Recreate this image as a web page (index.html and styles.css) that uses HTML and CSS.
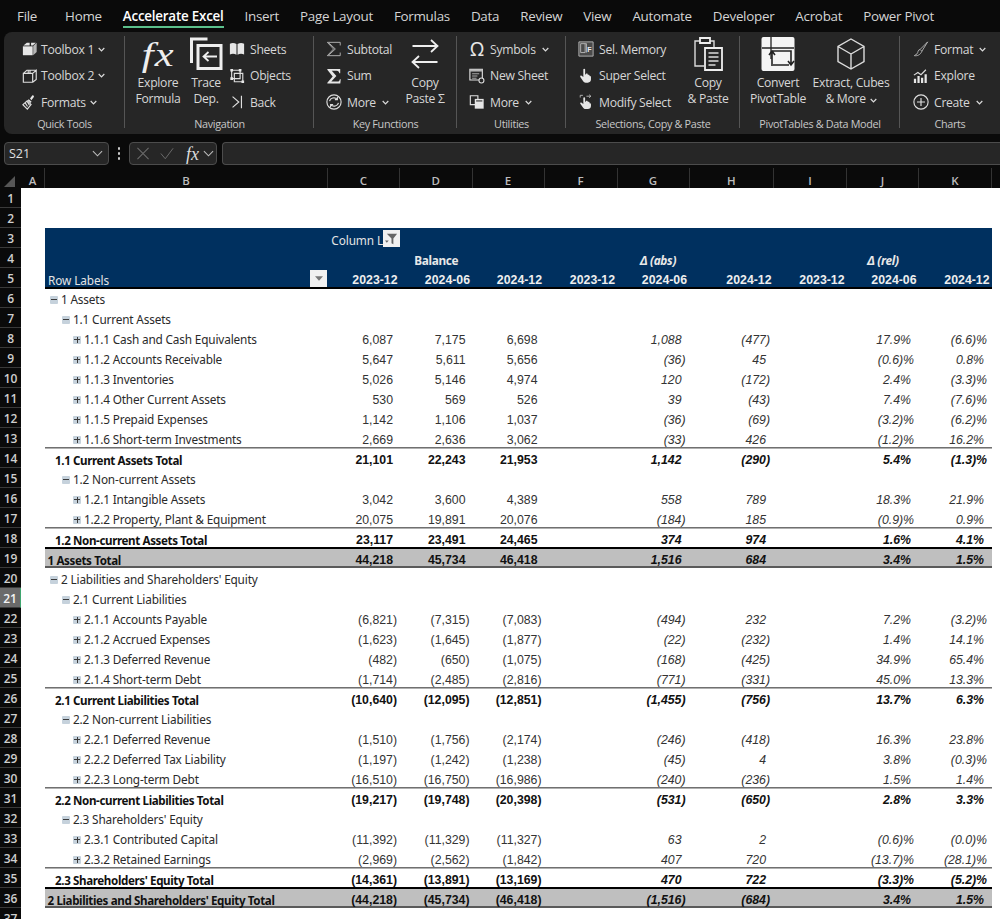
FILE: index.html
```html
<!DOCTYPE html>
<html lang="en">
<head>
<meta charset="utf-8">
<title>Accelerate Excel</title>
<link rel="stylesheet" href="styles.css">
</head>
<body>
<nav class="tabs">
  <span class="tab file">File</span><span class="tab">Home</span><span class="tab active">Accelerate Excel</span><span class="tab">Insert</span><span class="tab">Page Layout</span><span class="tab">Formulas</span><span class="tab">Data</span><span class="tab">Review</span><span class="tab">View</span><span class="tab">Automate</span><span class="tab">Developer</span><span class="tab">Acrobat</span><span class="tab">Power Pivot</span>
</nav>

<section class="ribbon">
  <div class="grp g1">
    <div class="body">
      <div class="col">
        <div class="item"><svg class="ic" viewBox="0 0 18 18"><path class="solid" d="M1 6h11v10H1z"/><path class="solid dim" d="M12.6 5.6 16.5 2v10.5l-3.9 3.5z"/><path class="solid" d="M1.6 5.2 5.4 2h3.2v3.2h1.6V2h5.4l-3.6 3.2z"/></svg><span>Toolbox 1</span><svg class="chev" viewBox="0 0 7 5"><path d="M.7 1 3.5 3.8 6.3 1"/></svg></div>
        <div class="item"><svg class="ic" viewBox="0 0 18 18"><path class="line" d="M1.5 6h10.5v10H1.5zM12 6l4-3.5V13l-4 3M1.5 6l4-3.5h10.5M7 2.5V6h2V2.5"/></svg><span>Toolbox 2</span><svg class="chev" viewBox="0 0 7 5"><path d="M.7 1 3.5 3.8 6.3 1"/></svg></div>
        <div class="item"><svg class="ic" viewBox="0 0 18 18"><path class="solid" d="M11.5 1.8c.8-.9 2.6.7 1.8 1.6L10.6 7 9 5.2z"/><path class="solid" d="m7.6 5.8 3.2 3-1.2 1.3-3.2-3z"/><path class="line" d="M6 7.6 1 12l5 5 4.2-5.2z"/><path class="line" d="m3.6 10 2.6 4M6 8.6l2.4 4"/></svg><span>Formats</span><svg class="chev" viewBox="0 0 7 5"><path d="M.7 1 3.5 3.8 6.3 1"/></svg></div>
      </div>
    </div>
    <div class="glabel">Quick Tools</div>
  </div>

  <div class="grp g2">
    <div class="body">
      <div class="big w50"><span class="fxbig">fx</span><span>Explore<br>Formula</span></div>
      <div class="big w46"><svg class="bigic" viewBox="0 0 34 36"><path class="w3" d="M2.5 27V3h16"/><path class="w3" d="M9 9.5h23v23H9z"/><path class="w2" d="M28 20.5H15M19.5 16l-5 4.5 5 4.5"/></svg><span>Trace<br>Dep.</span></div>
      <div class="col">
        <div class="item"><svg class="ic" viewBox="0 0 18 18"><path class="solid" d="M1 3c2.500-1 5-1 7.400.4V15.500C6 14.200 3.500 14.200 1 15.200z"/><path class="solid" d="M9.600 3.400C12 2 14.500 2 17 3v12.200c-2.500-1-5-1-7.400.3z"/></svg><span>Sheets</span></div>
        <div class="item"><svg class="ic" viewBox="0 0 18 18"><path class="line" d="M3 2.500h9.500V12H3zM6 6h9.500v9.500H6z"/><path class="solid" d="M1.500 1h3v3h-3zM11 1h3v3h-3zM1.500 10.500h3v3h-3zM14 14h3v3h-3z"/></svg><span>Objects</span></div>
        <div class="item"><svg class="ic" viewBox="0 0 18 18"><path class="line" d="m4 3 7 6-7 6M14 2v14"/></svg><span>Back</span></div>
      </div>
    </div>
    <div class="glabel">Navigation</div>
  </div>

  <div class="grp g3">
    <div class="body">
      <div class="col w74">
        <div class="item"><svg class="ic" viewBox="0 0 18 18"><path class="line thin" d="M16 5V1.500H1.500L8.500 9l-7 7.500H16V13M3.500 2.500l7 6.500-7 6.500"/></svg><span>Subtotal</span></div>
        <div class="item"><svg class="ic" viewBox="0 0 18 18"><path class="solid" d="M1.500 1H16v5h-1c-.3-1.800-1-2.800-3-2.800H6.500l5.200 5.800-5.700 6.300h7c1.500 0 2.300-1 2.600-2.700h1l-.5 4.900H1.500v-1l6-7L1.500 2z"/></svg><span>Sum</span></div>
        <div class="item"><svg class="ic" viewBox="0 0 18 18"><circle class="line" cx="9" cy="9" r="8"/><path class="line" d="M4 8c.6-3.500 6-5 8.500-2M14 10c-.6 3.500-6 5-8.500 2M12.800 3.500V6.300H10M5.200 14.500V11.800H8"/></svg><span>More</span><svg class="chev" viewBox="0 0 7 5"><path d="M.7 1 3.500 3.800 6.300 1"/></svg></div>
      </div>
      <div class="big w50"><svg class="bigic" viewBox="0 0 28 36"><path class="w2" d="M1.500 10H26M20 4l6.500 6-6.500 6M26.500 26H2M8 20l-6.500 6L8 32"/></svg><span>Copy<br>Paste Σ</span></div>
    </div>
    <div class="glabel">Key Functions</div>
  </div>

  <div class="grp g4">
    <div class="body">
      <div class="col">
        <div class="item"><span class="omega">Ω</span><span>Symbols</span><svg class="chev" viewBox="0 0 7 5"><path d="M.7 1 3.500 3.800 6.300 1"/></svg></div>
        <div class="item"><svg class="ic" viewBox="0 0 18 18"><path class="line" d="M1 1.500h14v12H1z"/><path class="solid dim" d="M1 1.500h14v2.500H1z"/><path class="line thin" d="M3.500 6.500h8M3.500 9h6M3.500 11.500h5"/><circle class="gear" cx="14" cy="14" r="2.800"/></svg><span>New Sheet</span></div>
        <div class="item"><svg class="ic" viewBox="0 0 18 18"><path class="line" d="M1.500 2h8.500v10H1.500z"/><path class="solid" d="M6.500 5.500h10v11h-10z"/><path class="cut" d="M8 7.800h7"/></svg><span>More</span><svg class="chev" viewBox="0 0 7 5"><path d="M.7 1 3.500 3.800 6.300 1"/></svg></div>
      </div>
    </div>
    <div class="glabel">Utilities</div>
  </div>

  <div class="grp g5">
    <div class="body">
      <div class="col w105">
        <div class="item"><svg class="ic" viewBox="0 0 18 18"><path class="solid dim2" d="M1 1h16v16H1z"/><path class="line thin" d="M1 1h16v16H1zM3 3h5v10H3zM8 3h1.500v10"/><text class="fmark" x="10.500" y="12">F</text></svg><span>Sel. Memory</span></div>
        <div class="item"><svg class="ic" viewBox="0 0 18 18"><path class="solid" d="M6 1.500c0-1 2-1 2 0V7l1 .3V6.500c1-.8 2 0 2 .5v.8c1-.6 2 0 2 .6v.8c1-.3 1.600.2 1.600 1V13c0 2-1.500 3.500-3.500 3.500H8.500c-1.200 0-2-.6-2.700-1.600L2.600 10c-.6-1 .6-2 1.500-1.200L6 10.200z"/></svg><span>Super Select</span></div>
        <div class="item"><svg class="ic" viewBox="0 0 18 18"><path class="solid" d="M6 4.500c0-1 2-1 2 0V8.500l1 .2V7.800c1-.8 2 0 2 .5v.8c1-.6 2 0 2 .6v.8c1-.3 1.600.2 1.600 1v2c0 2-1.500 3.500-3.500 3.500H8.500c-1.200 0-2-.6-2.700-1.600L2.600 11c-.6-1 .6-2 1.500-1.200L6 11.200z"/><path class="line thin" d="M2.500 4V1.500h3M9.500 2.500h5M12.500.8l2 1.700-2 1.700"/></svg><span>Modify Select</span></div>
      </div>
      <div class="big w50"><svg class="bigic" viewBox="0 0 30 36"><path class="w15" d="M11 30H2V5h5M17 5h4v6"/><path class="w2" d="M7 2h10v5H7z"/><path class="w2" d="M12 12h17v22H12z"/><path class="w15" d="M15.500 17h10M15.500 21h10M15.500 25h10M15.500 29h7"/></svg><span>Copy<br>&amp; Paste</span></div>
    </div>
    <div class="glabel">Selections, Copy &amp; Paste</div>
  </div>

  <div class="grp g6">
    <div class="body">
      <div class="big w70"><svg class="bigic" viewBox="0 0 34 36"><rect class="plate" x="0.500" y="1" width="33" height="34" rx="2"/><path class="ink" d="M1 12h32M10 1v22"/><path class="ink2" d="M11 30V15h19v13M12 29h16M8 19l3-4 3 4M27 25l3 4 3-4"/></svg><span>Convert<br>PivotTable</span></div>
      <div class="big w76"><svg class="bigic" viewBox="0 0 30 36"><path class="w15" d="M15 3 28 10.500v15L15 33 2 25.500v-15zM2 10.500 15 18l13-7.500M15 18v15"/></svg><span>Extract, Cubes<br>&amp; More <svg class="chev" viewBox="0 0 7 5"><path d="M.7 1 3.500 3.800 6.300 1"/></svg></span></div>
    </div>
    <div class="glabel">PivotTables &amp; Data Model</div>
  </div>

  <div class="grp g7">
    <div class="body">
      <div class="col">
        <div class="item"><svg class="ic" viewBox="0 0 18 18"><path class="line thin" d="M16.500 1 8 9.500l2 2zM8 9.500c-3 .5-2 3.500-3.500 5L1.500 16.500c3.500.5 7-1 8.500-5"/></svg><span>Format</span><svg class="chev" viewBox="0 0 7 5"><path d="M.7 1 3.500 3.800 6.300 1"/></svg></div>
        <div class="item"><svg class="ic" viewBox="0 0 18 18"><path class="solid" d="M1 12h2.500v5H1zM5 9h2.500v8H5zM9 11h2.500v6H9zM13 7h2.500v10H13z"/><path class="line" d="m1 8 4.500-3 3.500 2.500 5.500-5.500"/></svg><span>Explore</span></div>
        <div class="item"><svg class="ic" viewBox="0 0 18 18"><circle class="line" cx="9" cy="9" r="8"/><path class="line" d="M9 4.500v9M4.500 9h9"/></svg><span>Create</span><svg class="chev" viewBox="0 0 7 5"><path d="M.7 1 3.500 3.800 6.300 1"/></svg></div>
      </div>
    </div>
    <div class="glabel">Charts</div>
  </div>
</section>

<section class="fbar">
  <div class="namebox"><span>S21</span><svg class="chev2" viewBox="0 0 12 7"><path d="M1 1l5 5 5-5"/></svg></div>
  <div class="dots"><i></i><i></i><i></i></div>
  <div class="fxbox">
    <svg class="fi" viewBox="0 0 14 14"><path d="M1 1l12 12M13 1 1 13"/></svg>
    <svg class="fi" viewBox="0 0 16 14"><path d="M1 7l5 6L15 1"/></svg>
    <span class="fxsmall">fx</span>
    <svg class="chev3" viewBox="0 0 12 7"><path d="M1 1l5 5 5-5"/></svg>
  </div>
  <div class="finput"></div>
</section>

<div class="colhead">
  <div class="corner"><svg viewBox="0 0 11 11"><path d="M11 0v11H0z"/></svg></div>
  <span class="ca">A</span><span class="cb">B</span><span class="c72">C</span><span class="c72h">D</span><span class="c72">E</span><span class="c73">F</span><span class="c72">G</span><span class="c84">H</span><span class="c73">I</span><span class="c72">J</span><span class="c73">K</span>
</div>

<main class="sheet">
  <div class="row"><span class="rh">1</span></div>
  <div class="row"><span class="rh">2</span></div>
  <div class="row"><span class="rh">3</span><div class="cells hd"><span></span><span class="collab"><em>Column L</em><b class="fbtn"><svg viewBox="0 0 16 15"><path d="M3 2h11L10 7v6l-2-1V7z"/><path d="M1 9h4l-2 2.500z"/></svg></b></span></div></div>
  <div class="row"><span class="rh">4</span><div class="cells hd"><span></span><span></span><span class="ttl">Balance</span><span></span><span></span><span class="ttl it abs">Δ (abs)</span><span></span><span></span><span class="ttl it">Δ (rel)</span></div></div>
  <div class="row"><span class="rh">5</span><div class="cells hd last"><span class="rowlab"><em>Row Labels</em><b class="fbtn small"><svg viewBox="0 0 9 5"><path d="M0 0h9L4.500 5z"/></svg></b></span><span class="dt">2023-12</span><span class="dt">2024-06</span><span class="dt">2024-12</span><span class="dt">2023-12</span><span class="dt">2024-06</span><span class="dt">2024-12</span><span class="dt">2023-12</span><span class="dt">2024-06</span><span class="dt">2024-12</span></div></div>

  <div class="row"><span class="rh">6</span><div class="cells"><span class="lb l0"><i class="ex"></i>1 Assets</span></div></div>
  <div class="row"><span class="rh">7</span><div class="cells"><span class="lb l1"><i class="ex"></i>1.1 Current Assets</span></div></div>
  <div class="row"><span class="rh">8</span><div class="cells"><span class="lb l2"><i class="ex pl"></i>1.1.1 Cash and Cash Equivalents</span><span class="p">6,087</span><span class="p">7,175</span><span class="p">6,698</span><span></span><span class="p">1,088</span><span>(477)</span><span></span><span class="p">17.9%</span><span>(6.6)%</span></div></div>
  <div class="row"><span class="rh">9</span><div class="cells"><span class="lb l2"><i class="ex pl"></i>1.1.2 Accounts Receivable</span><span class="p">5,647</span><span class="p">5,611</span><span class="p">5,656</span><span></span><span>(36)</span><span class="p">45</span><span></span><span>(0.6)%</span><span class="p">0.8%</span></div></div>
  <div class="row"><span class="rh">10</span><div class="cells"><span class="lb l2"><i class="ex pl"></i>1.1.3 Inventories</span><span class="p">5,026</span><span class="p">5,146</span><span class="p">4,974</span><span></span><span class="p">120</span><span>(172)</span><span></span><span class="p">2.4%</span><span>(3.3)%</span></div></div>
  <div class="row"><span class="rh">11</span><div class="cells"><span class="lb l2"><i class="ex pl"></i>1.1.4 Other Current Assets</span><span class="p">530</span><span class="p">569</span><span class="p">526</span><span></span><span class="p">39</span><span>(43)</span><span></span><span class="p">7.4%</span><span>(7.6)%</span></div></div>
  <div class="row"><span class="rh">12</span><div class="cells"><span class="lb l2"><i class="ex pl"></i>1.1.5 Prepaid Expenses</span><span class="p">1,142</span><span class="p">1,106</span><span class="p">1,037</span><span></span><span>(36)</span><span>(69)</span><span></span><span>(3.2)%</span><span>(6.2)%</span></div></div>
  <div class="row"><span class="rh">13</span><div class="cells"><span class="lb l2"><i class="ex pl"></i>1.1.6 Short-term Investments</span><span class="p">2,669</span><span class="p">2,636</span><span class="p">3,062</span><span></span><span>(33)</span><span class="p">426</span><span></span><span>(1.2)%</span><span class="p">16.2%</span></div></div>
  <div class="row"><span class="rh">14</span><div class="cells total"><span class="lb t1">1.1 Current Assets Total</span><span class="p">21,101</span><span class="p">22,243</span><span class="p">21,953</span><span></span><span class="p">1,142</span><span>(290)</span><span></span><span class="p">5.4%</span><span>(1.3)%</span></div></div>
  <div class="row"><span class="rh">15</span><div class="cells"><span class="lb l1"><i class="ex"></i>1.2 Non-current Assets</span></div></div>
  <div class="row"><span class="rh">16</span><div class="cells"><span class="lb l2"><i class="ex pl"></i>1.2.1 Intangible Assets</span><span class="p">3,042</span><span class="p">3,600</span><span class="p">4,389</span><span></span><span class="p">558</span><span class="p">789</span><span></span><span class="p">18.3%</span><span class="p">21.9%</span></div></div>
  <div class="row"><span class="rh">17</span><div class="cells"><span class="lb l2"><i class="ex pl"></i>1.2.2 Property, Plant &amp; Equipment</span><span class="p">20,075</span><span class="p">19,891</span><span class="p">20,076</span><span></span><span>(184)</span><span class="p">185</span><span></span><span>(0.9)%</span><span class="p">0.9%</span></div></div>
  <div class="row"><span class="rh">18</span><div class="cells total"><span class="lb t1">1.2 Non-current Assets Total</span><span class="p">23,117</span><span class="p">23,491</span><span class="p">24,465</span><span></span><span class="p">374</span><span class="p">974</span><span></span><span class="p">1.6%</span><span class="p">4.1%</span></div></div>
  <div class="row"><span class="rh">19</span><div class="cells grand"><span class="lb t0">1 Assets Total</span><span class="p">44,218</span><span class="p">45,734</span><span class="p">46,418</span><span></span><span class="p">1,516</span><span class="p">684</span><span></span><span class="p">3.4%</span><span class="p">1.5%</span></div></div>
  <div class="row"><span class="rh">20</span><div class="cells"><span class="lb l0"><i class="ex"></i>2 Liabilities and Shareholders' Equity</span></div></div>
  <div class="row"><span class="rh sel">21</span><div class="cells"><span class="lb l1"><i class="ex"></i>2.1 Current Liabilities</span></div></div>
  <div class="row"><span class="rh">22</span><div class="cells"><span class="lb l2"><i class="ex pl"></i>2.1.1 Accounts Payable</span><span>(6,821)</span><span>(7,315)</span><span>(7,083)</span><span></span><span>(494)</span><span class="p">232</span><span></span><span class="p">7.2%</span><span>(3.2)%</span></div></div>
  <div class="row"><span class="rh">23</span><div class="cells"><span class="lb l2"><i class="ex pl"></i>2.1.2 Accrued Expenses</span><span>(1,623)</span><span>(1,645)</span><span>(1,877)</span><span></span><span>(22)</span><span>(232)</span><span></span><span class="p">1.4%</span><span class="p">14.1%</span></div></div>
  <div class="row"><span class="rh">24</span><div class="cells"><span class="lb l2"><i class="ex pl"></i>2.1.3 Deferred Revenue</span><span>(482)</span><span>(650)</span><span>(1,075)</span><span></span><span>(168)</span><span>(425)</span><span></span><span class="p">34.9%</span><span class="p">65.4%</span></div></div>
  <div class="row"><span class="rh">25</span><div class="cells"><span class="lb l2"><i class="ex pl"></i>2.1.4 Short-term Debt</span><span>(1,714)</span><span>(2,485)</span><span>(2,816)</span><span></span><span>(771)</span><span>(331)</span><span></span><span class="p">45.0%</span><span class="p">13.3%</span></div></div>
  <div class="row"><span class="rh">26</span><div class="cells total"><span class="lb t1">2.1 Current Liabilities Total</span><span>(10,640)</span><span>(12,095)</span><span>(12,851)</span><span></span><span>(1,455)</span><span>(756)</span><span></span><span class="p">13.7%</span><span class="p">6.3%</span></div></div>
  <div class="row"><span class="rh">27</span><div class="cells"><span class="lb l1"><i class="ex"></i>2.2 Non-current Liabilities</span></div></div>
  <div class="row"><span class="rh">28</span><div class="cells"><span class="lb l2"><i class="ex pl"></i>2.2.1 Deferred Revenue</span><span>(1,510)</span><span>(1,756)</span><span>(2,174)</span><span></span><span>(246)</span><span>(418)</span><span></span><span class="p">16.3%</span><span class="p">23.8%</span></div></div>
  <div class="row"><span class="rh">29</span><div class="cells"><span class="lb l2"><i class="ex pl"></i>2.2.2 Deferred Tax Liability</span><span>(1,197)</span><span>(1,242)</span><span>(1,238)</span><span></span><span>(45)</span><span class="p">4</span><span></span><span class="p">3.8%</span><span>(0.3)%</span></div></div>
  <div class="row"><span class="rh">30</span><div class="cells"><span class="lb l2"><i class="ex pl"></i>2.2.3 Long-term Debt</span><span>(16,510)</span><span>(16,750)</span><span>(16,986)</span><span></span><span>(240)</span><span>(236)</span><span></span><span class="p">1.5%</span><span class="p">1.4%</span></div></div>
  <div class="row"><span class="rh">31</span><div class="cells total"><span class="lb t1">2.2 Non-current Liabilities Total</span><span>(19,217)</span><span>(19,748)</span><span>(20,398)</span><span></span><span>(531)</span><span>(650)</span><span></span><span class="p">2.8%</span><span class="p">3.3%</span></div></div>
  <div class="row"><span class="rh">32</span><div class="cells"><span class="lb l1"><i class="ex"></i>2.3 Shareholders' Equity</span></div></div>
  <div class="row"><span class="rh">33</span><div class="cells"><span class="lb l2"><i class="ex pl"></i>2.3.1 Contributed Capital</span><span>(11,392)</span><span>(11,329)</span><span>(11,327)</span><span></span><span class="p">63</span><span class="p">2</span><span></span><span>(0.6)%</span><span>(0.0)%</span></div></div>
  <div class="row"><span class="rh">34</span><div class="cells"><span class="lb l2"><i class="ex pl"></i>2.3.2 Retained Earnings</span><span>(2,969)</span><span>(2,562)</span><span>(1,842)</span><span></span><span class="p">407</span><span class="p">720</span><span></span><span>(13.7)%</span><span>(28.1)%</span></div></div>
  <div class="row"><span class="rh">35</span><div class="cells total"><span class="lb t1">2.3 Shareholders' Equity Total</span><span>(14,361)</span><span>(13,891)</span><span>(13,169)</span><span></span><span class="p">470</span><span class="p">722</span><span></span><span>(3.3)%</span><span>(5.2)%</span></div></div>
  <div class="row"><span class="rh">36</span><div class="cells grand"><span class="lb t0">2 Liabilities and Shareholders' Equity Total</span><span>(44,218)</span><span>(45,734)</span><span>(46,418)</span><span></span><span>(1,516)</span><span>(684)</span><span></span><span class="p">3.4%</span><span class="p">1.5%</span></div></div>
  <div class="row"><span class="rh">37</span></div>
</main>
</body>
</html>
```
FILE: styles.css
```css
* { box-sizing: border-box; }
html, body { margin: 0; height: 919px; overflow: hidden; background: #0a0a0a; }
body { font-family: "Open Sans", "Noto Sans", sans-serif; color: #dcdcdc; }

/* tabs */
.tabs { display: flex; gap: 21px; height: 32px; padding-left: 17px; align-items: flex-start; font-size: 13.4px; letter-spacing: -.28px; white-space: nowrap; }
.tab { height: 28px; line-height: 32px; color: #d4d4d4; }
.tab.file { margin-right: 7px; }
.tab.active { color: #fff; font-weight: 600; border-bottom: 2px solid #5cc08c; letter-spacing: -.22px; }

/* ribbon */
.ribbon { display: flex; height: 102px; margin-left: 4px; padding-top: 4px; background: #262626; border-radius: 8px 0 0 8px; font-size: 12.2px; letter-spacing: -.3px; color: #d6d6d6; }
.grp { display: flex; flex-direction: column; height: 96px; background: linear-gradient(#555, #555) right top / 1px 92px no-repeat; flex: none; }
.g1 { width: 121px; } .g2 { width: 189px; } .g3 { width: 143px; } .g4 { width: 109px; } .g5 { width: 174px; } .g6 { width: 160px; } .g7 { width: 100px; background: none; }
.body { height: 80px; display: flex; align-items: flex-start; }
.g1 .body { padding-left: 18px; } .g2 .body { padding-left: 8px; } .g3 .body, .g4 .body, .g5 .body { padding-left: 12px; } .g6 .body { padding-left: 3px; } .g7 .body { padding-left: 13px; }
.glabel { height: 16px; line-height: 16px; text-align: center; font-size: 10.8px; letter-spacing: -.32px; color: #c8c8c8; white-space: nowrap; }
.col { display: flex; flex-direction: column; flex: none; }
.w74 { width: 74px; } .w105 { width: 105px; }
.item { display: flex; align-items: center; height: 26.5px; gap: 5px; white-space: nowrap; }
.g1 .item { gap: 3px; }
.ic { width: 16px; height: 16px; flex: none; }
.solid { fill: #e6e6e6; stroke: none; }
.solid.dim { fill: #b5b5b5; }
.solid.dim2 { fill: #4a4a4a; }
.line { fill: none; stroke: #dedede; stroke-width: 1.3; }
.line.thin { stroke-width: 1; stroke: #bbb; }
.gear { fill: #262626; stroke: #dedede; stroke-width: 1.2; }
.cut { stroke: #262626; stroke-width: 1.2; fill: none; }
.fmark { font: bold 8px "Liberation Sans", sans-serif; fill: #eee; }
.chev { width: 7px; height: 5px; margin-left: 1px; fill: none; stroke: #dcdcdc; stroke-width: 1.2; flex: none; }
.omega { width: 16px; text-align: center; font: 19px/1 "Noto Sans", sans-serif; color: #e6e6e6; flex: none; }
.big { display: flex; flex-direction: column; align-items: center; text-align: center; line-height: 16px; white-space: nowrap; flex: none; }
.w46 { width: 46px; } .w50 { width: 50px; } .w70 { width: 70px; } .w76 { width: 76px; }
.big > :first-child { height: 39px; flex: none; }
.bigic { width: 34px; height: 36px; margin-bottom: 3px; }
.big > .bigic:first-child { height: 36px; }
.fxbig { display: block; font: italic 34px/37px "Liberation Serif", serif; letter-spacing: 1px; transform: scaleX(1.25); color: #eee; }
.w3 { fill: none; stroke: #eee; stroke-width: 3; }
.w2 { fill: none; stroke: #eee; stroke-width: 1.8; }
.w15 { fill: none; stroke: #dcdcdc; stroke-width: 1.4; }
.plate { fill: #f4f4f4; }
.ink { fill: none; stroke: #222; stroke-width: 1.3; }
.ink2 { fill: none; stroke: #222; stroke-width: 1.6; }

/* formula bar */
.fbar { display: flex; align-items: stretch; height: 23px; margin: 8px 0 3px 4px; }
.namebox, .fxbox, .finput { background: #262626; border: 1px solid #4c4c4c; border-radius: 4px; }
.namebox { width: 105px; display: flex; align-items: center; justify-content: space-between; padding: 0 5px 0 4px; font-size: 12.5px; color: #e0e0e0; }
.chev2, .chev3 { width: 11px; height: 7px; fill: none; stroke: #bbb; stroke-width: 1.2; flex: none; }
.dots { width: 20px; display: flex; flex-direction: column; align-items: center; justify-content: center; gap: 2.500px; }
.dots i { width: 2.500px; height: 2.500px; background: #ccc; border-radius: 50%; }
.fxbox { width: 88px; display: flex; align-items: center; padding-left: 6px; gap: 10px; }
.fi { width: 14px; height: 13px; fill: none; stroke: #6c6c6c; stroke-width: 1.1; flex: none; }
.fxsmall { font: italic 18px/1 "Liberation Serif", serif; color: #ddd; margin-left: 2px; margin-right: -6px; }
.finput { flex: 1; margin-left: 5px; border-right: 0; border-radius: 4px 0 0 4px; }

/* column headers */
.colhead { display: flex; height: 20px; font-size: 11.5px; font-weight: 600; color: #bdbdbd; }
.colhead span { display: flex; align-items: center; justify-content: center; border-right: 1px solid #333; padding-top: 5px; flex: none; }
.corner { width: 21px; display: flex; align-items: flex-end; justify-content: center; padding: 0 2px 1px 0; flex: none; }
.corner svg { width: 11px; height: 11px; fill: #565656; }
.ca { width: 24px; } .cb { width: 283px; } .c72 { width: 72px; } .c72h { width: 72.5px; } .c73 { width: 73px; } .c84 { width: 84.5px; }

/* sheet */
.sheet { background: #fff; }
.row { display: flex; height: 20px; }
.rh { width: 21px; flex: none; background: #0a0a0a; border-bottom: 1px solid #3a3a3a; color: #cfcfcf; font-size: 12px; font-weight: 600; line-height: 22px; text-align: center; letter-spacing: -.2px; }
.rh.sel { background: #6a6a6a; color: #f4f4f4; border-right: 1px solid #3fa56f; }
.cells { width: 947px; margin-left: 24px; height: 20px; display: grid; grid-template-columns: 283px 72px 72.5px 72px 73px 72px 84.5px 73px 72px 73px; align-items: end; font: 12.3px/16px "Liberation Sans", sans-serif; color: #333; text-align: right; white-space: nowrap; }
.cells > span { padding-right: 3px; height: 16px; }
.cells > .p { padding-right: 7px; }
.cells > :nth-child(n+6) { font-style: italic; padding-right: 4px; }
.cells > .p:nth-child(n+6) { padding-right: 8px; }
.cells > :nth-child(n+9) { padding-right: 5px; }
.cells > .p:nth-child(n+9) { padding-right: 8px; }

.lb { font: 11.8px/15px "Noto Sans", sans-serif; letter-spacing: -.16px; color: #2a2a2a; text-align: left; display: flex; align-items: center; padding-bottom: 1px; }
.cells > .l0 { padding-left: 5px; } .cells > .l1 { padding-left: 17px; } .cells > .l2 { padding-left: 28px; }
.cells > .t1 { padding-left: 10px; } .cells > .t0 { padding-left: 2.500px; }
.ex { width: 8px; height: 8px; margin-right: 3px; flex: none; border-radius: 1px; background: linear-gradient(#3c3c3c, #3c3c3c) center / 6px 1px no-repeat, #c6d2dc; }
.ex.pl { background: linear-gradient(#3c3c3c, #3c3c3c) center / 6px 1px no-repeat, linear-gradient(#3c3c3c, #3c3c3c) center / 1px 6px no-repeat, #c6d2dc; }

.total, .grand { font-weight: 700; color: #111; }
.total .lb, .grand .lb { font-weight: 700; font-size: 11.6px; color: #111; letter-spacing: -.38px; padding-bottom: 0; }
.total { box-shadow: 0 -1px 0 #707070, inset 0 1px 0 #b0b0b0; }
.grand { background: #bfbfbf; box-shadow: 0 -1px 0 #000, inset 0 1px 0 #000, inset 0 -2px 0 #5a5a5a; }

.hd { background: #00305f; color: #eee; align-items: end; }
.hd.last { box-shadow: 0 1px 0 #000, inset 0 -1px 0 #000; }
.collab { grid-column: 2; display: flex; justify-content: space-between; padding: 0 !important; overflow: hidden; height: 19px !important; align-items: flex-end; }
.collab em, .rowlab em { font: 11.8px/16px "Noto Sans", sans-serif; letter-spacing: -.1px; color: #e4e4e4; padding-left: 3px; }
.collab em { width: 55px; overflow: hidden; padding-bottom: 0; }
.rowlab { display: flex; justify-content: space-between; align-items: flex-end; height: 19px !important; padding-right: 1px !important; }
.fbtn { width: 17px; height: 17px; margin-bottom: 1px; display: flex; align-items: center; justify-content: center; background: #f1f1f1; flex: none; }
.fbtn svg { width: 15px; height: 14px; fill: #666; }
.fbtn.small svg { width: 8px; height: 5px; fill: #777; }
.ttl { font-weight: 700; text-align: center; padding: 0 !important; color: #e8e8e8; font-family: "Noto Sans", sans-serif; font-size: 11.8px; letter-spacing: -.3px; }
.ttl.it { font-style: italic; }
.ttl.abs { padding-left: 9px !important; }
.cells > .dt { font-weight: 700; font-style: normal; padding-right: 2.500px; color: #eee; }
```
